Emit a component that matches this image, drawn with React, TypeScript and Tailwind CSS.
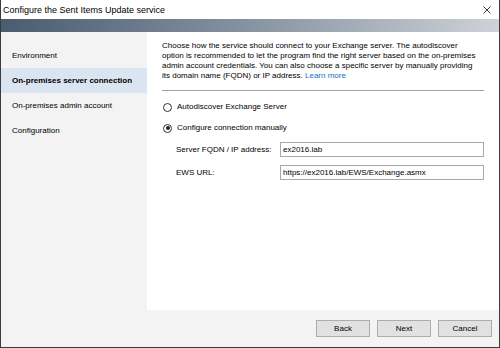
import React from 'react';

const steps = [
  { label: 'Environment', active: false },
  { label: 'On-premises server connection', active: true },
  { label: 'On-premises admin account', active: false },
  { label: 'Configuration', active: false },
];

function Radio({ checked }: { checked?: boolean }) {
  return (
    <span className="flex h-[9px] w-[9px] shrink-0 items-center justify-center rounded-full border border-[#333] bg-white">
      {checked && <span className="h-[4px] w-[4px] rounded-full bg-[#222]" />}
    </span>
  );
}

function Field({ label, value }: { label: string; value: string }) {
  return (
    <div className="flex h-[15px] items-center">
      <span className="w-[118px] shrink-0 whitespace-nowrap pl-[14px]">{label}</span>
      <div className="flex h-[15px] w-[204px] items-center border border-[#a9a9a9] bg-white pl-[2px]">{value}</div>
    </div>
  );
}

function Button({ children }: { children: React.ReactNode }) {
  return (
    <button className="flex h-[17px] w-[54px] items-center justify-center border border-[#adadad] bg-[#e1e1e1] text-[8px] text-black">
      {children}
    </button>
  );
}

export default function App() {
  return (
    <div className="flex h-[348px] w-[500px] flex-col border-x border-b border-[#3b3b3b] bg-white font-['Liberation_Sans',Arial,sans-serif] text-[8px] leading-[12px] text-black">
      {/* Title bar */}
      <div className="flex h-[19px] shrink-0 items-center justify-between pl-[2px] pr-[8px]">
        <span className="text-[9px]">Configure the Sent Items Update service</span>
        <svg width="8" height="8" viewBox="0 0 8 8" className="text-[#222]">
          <path d="M0.5 0.5 L7.5 7.5 M7.5 0.5 L0.5 7.5" stroke="currentColor" strokeWidth="0.9" />
        </svg>
      </div>

      {/* Banner */}
      <div className="h-[13px] shrink-0 bg-gradient-to-r from-[#4a5c70] via-[#8793a1] to-[#cfd2d7]" />

      <div className="flex flex-1">
        {/* Steps */}
        <div className="flex w-[146px] shrink-0 flex-col bg-[#f3f3f3] pt-[11px]">
          {steps.map((s) => (
            <div
              key={s.label}
              className={
                s.active
                  ? 'flex h-[25px] items-center bg-[#dbe5f2] pl-[11px] font-bold'
                  : 'flex h-[25px] items-center pl-[11px]'
              }
            >
              {s.label}
            </div>
          ))}
        </div>

        {/* Page */}
        <div className="flex flex-1 flex-col pl-[15px] pr-[15px] pt-[9px]">
          <p className="whitespace-nowrap text-[8px] leading-[10px]">
            Choose how the service should connect to your Exchange server. The autodiscover
            <br />
            option is recommended to let the program find the right server based on the on-premises
            <br />
            admin account credentials. You can also choose a specific server by manually providing
            <br />
            its domain name (FQDN) or IP address. <span className="text-[#1a6dc4]">Learn more</span>
          </p>
          <div className="mt-[9px] h-px bg-[#a0a0a0]" />

          <div className="mt-[10px] flex items-center gap-[5px] pl-[1px]">
            <Radio />
            <span>Autodiscover Exchange Server</span>
          </div>
          <div className="mt-[9px] flex items-center gap-[5px] pl-[1px]">
            <Radio checked />
            <span>Configure connection manually</span>
          </div>

          <div className="mt-[8px] flex flex-col gap-[8px]">
            <Field label="Server FQDN / IP address:" value="ex2016.lab" />
            <Field label="EWS URL:" value="https://ex2016.lab/EWS/Exchange.asmx" />
          </div>
        </div>
      </div>

      {/* Footer */}
      <div className="flex h-[37px] shrink-0 items-center justify-end gap-[7px] bg-[#f3f3f3] pr-[7px]">
        <Button>Back</Button>
        <Button>Next</Button>
        <Button>Cancel</Button>
      </div>
    </div>
  );
}
